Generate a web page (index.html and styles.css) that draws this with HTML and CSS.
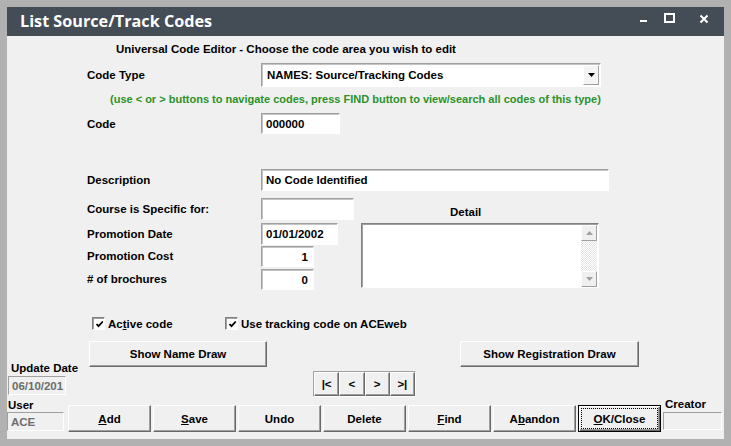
FILE: index.html
```html
<!DOCTYPE html>
<html>
<head>
<meta charset="utf-8">
<title>List Source/Track Codes</title>
<link rel="stylesheet" href="styles.css">
</head>
<body>
<div class="window">
  <div class="titlebar">
    <span class="title">List Source/Track Codes</span>
    <svg class="controls" width="92" height="29" viewBox="0 0 92 29">
      <rect x="8" y="13" width="7" height="2" fill="#fff"/>
      <rect x="33" y="7" width="9" height="8" fill="none" stroke="#fff" stroke-width="2"/>
      <path d="M68.5 8.5 L75.5 15.5 M75.5 8.5 L68.5 15.5" stroke="#fff" stroke-width="2" fill="none"/>
    </svg>
  </div>
  <div class="content">
    <div class="heading">Universal Code Editor - Choose the code area you wish to edit</div>
    <div class="row r-type">
      <div class="lbl">Code Type</div>
      <div class="field select">
        <span class="val">NAMES: Source/Tracking Codes</span>
        <span class="drop"><svg width="7" height="4" viewBox="0 0 7 4"><path d="M0 0H7L3.5 4Z" fill="#000"/></svg></span>
      </div>
    </div>
    <div class="hint">(use &lt; or &gt; buttons to navigate codes, press FIND button to view/search all codes of this type)</div>
    <div class="row r-code">
      <div class="lbl">Code</div>
      <div class="field f-code">000000</div>
    </div>
    <div class="row r-desc">
      <div class="lbl">Description</div>
      <div class="field f-desc">No Code Identified</div>
    </div>
    <div class="grid">
      <div class="lbl h22">Course is Specific for:</div>
      <div class="field f-course"></div>
      <div class="detail-lbl">Detail</div>
      <div class="lbl h22">Promotion Date</div>
      <div class="field f-date">01/01/2002</div>
      <div class="detail">
        <div class="scroll">
          <div class="sb-btn"><svg width="7" height="4" viewBox="0 0 7 4"><path d="M0 4H7L3.5 0Z" fill="#a0a0a0"/></svg></div>
          <div class="sb-track"></div>
          <div class="sb-btn"><svg width="7" height="4" viewBox="0 0 7 4"><path d="M0 0H7L3.5 4Z" fill="#a0a0a0"/></svg></div>
        </div>
      </div>
      <div class="lbl h21">Promotion Cost</div>
      <div class="field f-num">1</div>
      <div class="lbl h21"># of brochures</div>
      <div class="field f-num">0</div>
    </div>
    <div class="checks">
      <div class="chk c1"><span class="box"><svg width="9" height="9" viewBox="0 0 9 9"><path d="M1.5 4 L3.5 6.2 L7.8 1.5" stroke="#000" stroke-width="1.8" fill="none"/></svg></span><span>Ac<u>t</u>ive code</span></div>
      <div class="chk"><span class="box"><svg width="9" height="9" viewBox="0 0 9 9"><path d="M1.5 4 L3.5 6.2 L7.8 1.5" stroke="#000" stroke-width="1.8" fill="none"/></svg></span><span>Use tracking code on ACEweb</span></div>
    </div>
    <div class="lower">
      <div class="leftcol">
        <div class="small-lbl l-upd">Update Date</div>
        <div class="field ro f-upd">06/10/201</div>
        <div class="small-lbl l-user">User</div>
        <div class="field ro f-user">ACE</div>
      </div>
      <div class="maincol">
        <div class="draws">
          <div class="btn b-name">Show Name Draw</div>
          <div class="btn b-reg">Show Registration Draw</div>
        </div>
        <div class="nav">
          <div class="btn nb">|&lt;</div>
          <div class="btn nb">&lt;</div>
          <div class="btn nb">&gt;</div>
          <div class="btn nb">&gt;|</div>
        </div>
        <div class="actions">
          <div class="btn act"><span><u>A</u>dd</span></div>
          <div class="btn act"><span><u>S</u>ave</span></div>
          <div class="btn act"><span>Undo</span></div>
          <div class="btn act"><span>Delete</span></div>
          <div class="btn act"><span><u>F</u>ind</span></div>
          <div class="btn act"><span>A<u>b</u>andon</span></div>
          <div class="btn act default"><span class="focus"><u>O</u>K/Close</span></div>
        </div>
      </div>
      <div class="creatorcol">
        <div class="small-lbl l-creator">Creator</div>
        <div class="field ro f-creator"></div>
      </div>
    </div>
  </div>
</div>
</body>
</html>
```

FILE: styles.css
```css
* { box-sizing: border-box; }
html, body { margin: 0; padding: 0; }
body {
  width: 731px;
  height: 446px;
  overflow: hidden;
  background: #b1b1b1;
  font-family: "Liberation Sans", Arial, sans-serif;
  font-weight: bold;
  font-size: 11.5px;
  color: #000;
}
.window {
  width: 731px;
  height: 446px;
  border: 7px solid #b1b1b1;
  background: #f0f0f0;
  display: flex;
  flex-direction: column;
}
.titlebar {
  flex: none;
  height: 29px;
  background: #444c55;
  display: flex;
  align-items: center;
  padding-left: 13px;
  color: #fff;
}
.title {
  font-family: "Open Sans", "Noto Sans", sans-serif;
  font-weight: 700;
  font-size: 16.2px;
  line-height: 1;
}
.controls { margin-left: auto; display: block; }

.content { flex: 1; padding-top: 6px; }
.heading { margin-left: 109px; height: 14px; line-height: 14px; }
.row { display: flex; align-items: center; padding-left: 80px; }
.lbl { width: 174px; flex: none; }

.field {
  background: #fff;
  border: 1px solid;
  border-color: #a0a0a0 #fff #fff #a0a0a0;
  box-shadow: inset 1px 1px 0 #c4c4c4;
  padding-left: 4px;
  display: flex;
  align-items: center;
  white-space: nowrap;
  overflow: hidden;
}

.r-type { margin-top: 7px; }
.select { width: 340px; height: 24px; padding-left: 5px; }
.select .val { flex: 1; }
.drop {
  width: 16px;
  height: 20px;
  margin-right: 1px;
  background: #f4f4f4;
  border: 1px solid;
  border-color: #fff #a0a0a0 #a0a0a0 #fff;
  display: flex;
  align-items: center;
  justify-content: center;
}
.drop svg { display: block; }

.hint {
  margin-top: 5px;
  margin-left: 103px;
  height: 14px;
  line-height: 14px;
  font-size: 11px;
  color: #2a922a;
  white-space: nowrap;
}
.r-code { margin-top: 7px; }
.f-code { width: 79px; height: 21px; }
.r-desc { margin-top: 35px; }
.f-desc { width: 348px; height: 22px; }

.grid {
  margin-top: 7px;
  padding-left: 80px;
  display: grid;
  grid-template-columns: 174px 100px 238px;
  grid-template-rows: 25px 23px 23px 22px;
}
.grid .lbl { align-self: start; }
.h22 { line-height: 22px; }
.h21 { line-height: 21px; }
.grid .field { align-self: start; }
.f-course { width: 93px; height: 22px; }
.f-date { width: 77px; height: 22px; }
.f-num { width: 53px; height: 21px; justify-content: flex-end; padding-right: 5px; }
.detail-lbl { align-self: start; margin-top: 7px; padding-left: 89px; line-height: 14px; }
.detail {
  grid-column: 3;
  grid-row: 2 / 5;
  align-self: start;
  height: 65px;
  background: #fff;
  border: 1px solid;
  border-color: #808080 #fff #fff #808080;
  box-shadow: inset 1px 1px 0 #a0a0a0;
  display: flex;
  justify-content: flex-end;
  padding: 1px 1px 0 0;
}
.scroll { width: 16px; display: flex; flex-direction: column; }
.sb-btn {
  height: 16px;
  background: #f0f0f0;
  border: 1px solid;
  border-color: #fff #a0a0a0 #a0a0a0 #fff;
  display: flex;
  align-items: center;
  justify-content: center;
}
.sb-btn svg { display: block; }
.sb-track {
  flex: 1;
  background: repeating-conic-gradient(#e4e4e4 0 25%, #fff 0 50%) 0 0 / 2px 2px;
}

.checks { margin-top: 26px; padding-left: 85px; display: flex; align-items: center; height: 13px; }
.chk { display: flex; align-items: center; }
.c1 { width: 133px; }
.box {
  width: 13px;
  height: 13px;
  background: #fff;
  border: 1px solid;
  border-color: #808080 #fff #fff #808080;
  box-shadow: inset 1px 1px 0 #a0a0a0;
  display: flex;
  align-items: center;
  justify-content: center;
  margin-right: 3px;
  padding: 1px 0 0 1px;
}
.box svg { display: block; }

.lower { margin-top: 11px; display: flex; }
.leftcol { width: 61px; flex: none; padding-top: 20px; }
.small-lbl { line-height: 14px; height: 14px; white-space: nowrap; }
.l-upd { padding-left: 4px; }
.ro { background: #f0f0f0; color: #6d6d6d; box-shadow: none; padding-left: 3px; }
.f-upd { margin-top: 1px; margin-left: 1px; width: 58px; height: 19px; }
.l-user { margin-top: 3px; padding-left: 1px; }
.f-user { width: 57px; height: 19px; }

.maincol { width: 594px; flex: none; }
.btn {
  background: #f0f0f0;
  border: 1px solid;
  border-color: #fff #696969 #696969 #fff;
  box-shadow: inset -1px -1px 0 #a0a0a0;
  display: flex;
  align-items: center;
  justify-content: center;
  white-space: nowrap;
}
.draws { display: flex; height: 26px; }
.b-name { margin-left: 21px; width: 178px; }
.b-reg { margin-left: 193px; width: 179px; }
.nav {
  margin-top: 4px;
  margin-left: 245px;
  width: 103px;
  height: 26px;
  display: flex;
  border: 1px solid;
  border-color: #a0a0a0 #fff #fff #a0a0a0;
}
.nb { width: 25.25px; height: 24px; }
.actions { margin-top: 8px; display: flex; gap: 2px; height: 27px; }
.act { width: 83px; }
.default { border-color: #000; box-shadow: inset 1px 1px 0 #fff, inset -1px -1px 0 #696969, inset -2px -2px 0 #a0a0a0; padding: 3px; }
.focus {
  width: 100%;
  height: 100%;
  display: flex;
  align-items: center;
  justify-content: center;
  outline: 1px dotted #000;
}

.creatorcol { width: 59px; flex: none; margin-left: 1px; padding-top: 57px; }
.l-creator { line-height: 12px; height: 13px; padding-left: 2px; }
.f-creator { margin-top: 1px; width: 59px; height: 18px; }
```
